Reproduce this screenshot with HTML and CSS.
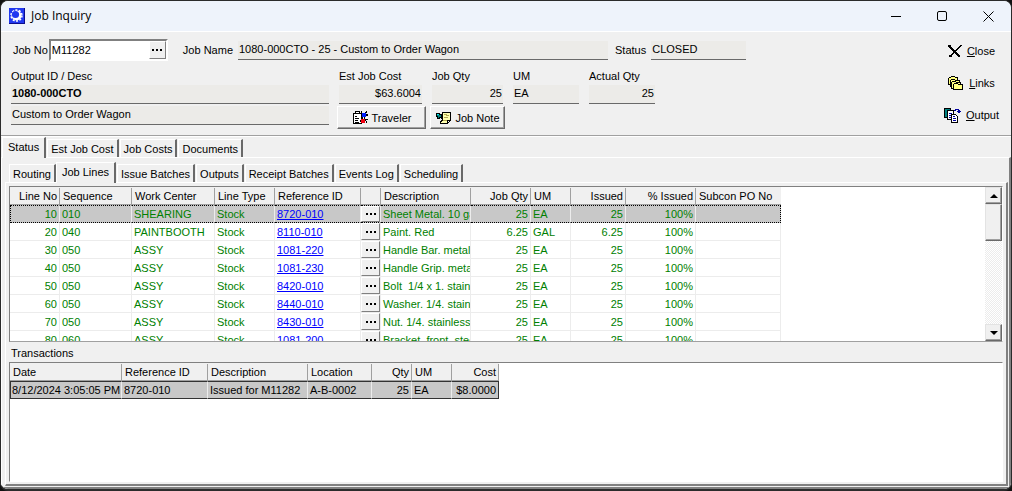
FILE: index.html
```html
<!DOCTYPE html>
<html lang="en">
  <head>
    <meta charset="UTF-8" />
    <meta name="viewport" content="width=device-width, initial-scale=1.0" />
    <title>Job Inquiry</title>
    <link rel="stylesheet" href="styles.css">
  </head>
  <body>
    <div class="window">
      <header class="titlebar">
        <svg class="app-icon" width="16" height="16" viewBox="0 0 16 16">
          <rect width="16" height="16" fill="#0c0c8c" />
          <rect width="15" height="15" fill="#2038f0" />
          <circle cx="7.500" cy="7.500" r="5" fill="#fff" />
          <circle cx="7.500" cy="7.500" r="5.500" fill="none" stroke="#fff" stroke-width="1.500" stroke-dasharray="2 1.450" />
          <circle cx="6.500" cy="6.500" r="3.600" fill="#2038f0" />
        </svg>
        <h1>Job Inquiry</h1>
        <div class="window-buttons">
          <button type="button" aria-label="Minimize">
            <svg width="11" height="11" viewBox="0 0 11 11"><path d="M0 5.5h10" /></svg>
          </button>
          <button type="button" aria-label="Maximize">
            <svg width="11" height="11" viewBox="0 0 11 11"><rect x=".5" y=".5" width="9" height="9" rx="1.5" /></svg>
          </button>
          <button type="button" aria-label="Close window">
            <svg width="11" height="11" viewBox="0 0 11 11"><path d="M.5.5l10 10M10.5.5l-10 10" /></svg>
          </button>
        </div>
      </header>

      <section class="job-header">
        <form class="job-form">
          <div class="form-row">
            <label for="jobNo">Job No</label>
            <div class="lookup">
              <input type="text" id="jobNo" value="M11282" />
              <button type="button" class="dots" aria-label="Find job"><i></i></button>
            </div>
            <label for="jobName" class="label-name">Job Name</label>
            <input type="text" id="jobName" class="field w-name" value="1080-000CTO - 25 - Custom to Order Wagon" readonly />
            <label for="status" class="label-status">Status</label>
            <input type="text" id="status" class="field w-status" value="CLOSED" readonly />
          </div>
          <div class="form-grid">
            <label for="outputId">Output ID / Desc</label>
            <label for="estCost">Est Job Cost</label>
            <label for="jobQty">Job Qty</label>
            <label for="um">UM</label>
            <label for="actualQty">Actual Qty</label>

            <input type="text" id="outputId" class="field bold" value="1080-000CTO" readonly />
            <input type="text" id="estCost" class="field num" value="$63.6004" readonly />
            <input type="text" id="jobQty" class="field num" value="25" readonly />
            <input type="text" id="um" class="field" value="EA" readonly />
            <input type="text" id="actualQty" class="field num" value="25" readonly />

            <input type="text" class="field" value="Custom to Order Wagon" aria-label="Output description" readonly />
            <div class="form-buttons">
              <button type="button" class="push">
                <svg width="17" height="15" viewBox="0 0 17 15" shape-rendering="crispEdges">
                  <path d="M1.500 3.500h8v10h-8z" fill="#fff" stroke="#000" />
                  <path d="M3.500 1.500h4v2h-4z" fill="#fff" stroke="#000" />
                  <path d="M3 6.500h2M3 8.500h4M3 10.500h3M3 12.500h4" stroke="#000" />
                  <path d="M9 1l6 12M15 1L8 12M8 3l8 3M9 8l7-4M9 13l7-4" stroke="#000" fill="none" />
                  <path d="M10 3h4v4h-4z" fill="#0020ff" />
                  <path d="M9 9h4v4H9z" fill="#f00010" />
                  <path d="M14 7h2v2h-2z" fill="#fff" />
                </svg>
                Traveler
              </button>
              <button type="button" class="push">
                <svg width="17" height="14" viewBox="0 0 17 14" shape-rendering="crispEdges">
                  <path d="M7.500 1.500h8v8l-3 3h-7v-2l2-1z" fill="#ffffb0" stroke="#000" />
                  <path d="M9 3.500h2v1h3M9 6.500h4M8 9.500h4" stroke="#b0a850" fill="none" />
                  <path d="M12.500 12.500v-3h3z" stroke="#000" fill="#fff" />
                  <path d="M1.500 2.500h3v1h2v3h-2v1h-2v-2h-1z" fill="#008080" stroke="#000" />
                  <path d="M2 3h2v1H2z" fill="#00f0f0" />
                  <path d="M5 6l3 3" stroke="#000" />
                </svg>
                Job Note
              </button>
            </div>
          </div>
        </form>
        <nav class="side-links">
          <a href="#">
            <svg width="14" height="13" viewBox="0 0 14 13" shape-rendering="crispEdges">
              <path d="M1 1l11 11" stroke="#000" stroke-width="2" />
              <path d="M13 0L2 12" stroke="#000" stroke-width="1.5" />
              <path d="M0 0h3v2H0zM1 10h3v2H1z" fill="#000" />
            </svg>
            <span><u>C</u>lose</span>
          </a>
          <a href="#">
            <svg width="16" height="15" viewBox="0 0 16 15" shape-rendering="crispEdges" stroke="#000" fill="#ffff80">
              <path d="M.5 8.500v-6l1-1h1l1-1h3l1 1h2v7z" />
              <path d="M2.500 10.500v-6l1-1h3l1 1h4v6z" />
              <path d="M3.500 12.500v-6l1-1h3l1 1h4v6z" />
              <path d="M5.500 13.500v-5l1-1h3l1 1h4v5z" />
            </svg>
            <span><u>L</u>inks</span>
          </a>
          <a href="#">
            <svg width="17" height="15" viewBox="0 0 17 15" shape-rendering="crispEdges">
              <path d="M.5.5h6v9h-6z" fill="#008080" stroke="#000" />
              <path d="M3.500 2.500h6v9h-6z" fill="#fff" stroke="#000" />
              <path d="M5 5.500h3M5 7.500h3M5 9.500h3" stroke="#0000a0" />
              <path d="M7.500 6.500h4l2 2v6h-6z" fill="#fff" stroke="#000" />
              <path d="M9 8.500h2M9 10.500h3M9 12.500h3" stroke="#0000a0" />
              <path d="M10 2.500h1v-1h3v1h1v2M13 3.500h4M14 4.500h2" stroke="#0000a0" fill="none" />
            </svg>
            <span><u>O</u>utput</span>
          </a>
        </nav>
      </section>

      <div class="tabs outer-tabs" role="tablist">
        <button type="button" role="tab" class="tab active" aria-selected="true">Status</button>
        <button type="button" role="tab" class="tab">Est Job Cost</button>
        <button type="button" role="tab" class="tab">Job Costs</button>
        <button type="button" role="tab" class="tab">Documents</button>
      </div>

      <main class="page outer-page">
        <div class="tabs inner-tabs" role="tablist">
          <button type="button" role="tab" class="tab">Routing</button>
          <button type="button" role="tab" class="tab active" aria-selected="true">Job Lines</button>
          <button type="button" role="tab" class="tab">Issue Batches</button>
          <button type="button" role="tab" class="tab">Outputs</button>
          <button type="button" role="tab" class="tab">Receipt Batches</button>
          <button type="button" role="tab" class="tab">Events Log</button>
          <button type="button" role="tab" class="tab">Scheduling</button>
        </div>

        <div class="page inner-page">
          <div class="grid lines-grid">
            <div class="grid-body">
              <table class="lines">
                <colgroup>
                  <col class="c50" /><col class="c72" /><col class="c83" /><col class="c60" />
                  <col class="c86" /><col class="c20" /><col class="c90" /><col class="c60" />
                  <col class="c40" /><col class="c55" /><col class="c70" /><col class="c85" />
                </colgroup>
                <thead>
                  <tr>
                    <th class="num">Line No</th>
                    <th>Sequence</th>
                    <th>Work Center</th>
                    <th>Line Type</th>
                    <th>Reference ID</th>
                    <th></th>
                    <th>Description</th>
                    <th class="num">Job Qty</th>
                    <th>UM</th>
                    <th class="num">Issued</th>
                    <th class="num">% Issued</th>
                    <th>Subcon PO No</th>
                  </tr>
                </thead>
                <tbody id="lineRows"></tbody>
              </table>
            </div>
            <div class="scrollbar">
              <button type="button" class="arrow up" aria-label="Scroll up"></button>
              <div class="thumb"></div>
              <button type="button" class="arrow down" aria-label="Scroll down"></button>
            </div>
          </div>

          <h2>Transactions</h2>

          <div class="grid trans-grid">
            <table class="trans">
              <colgroup>
                <col class="c112" /><col class="c86" /><col class="c100" /><col class="c64" />
                <col class="c40" /><col class="c40" /><col class="c47" />
              </colgroup>
              <thead>
                <tr>
                  <th>Date</th>
                  <th>Reference ID</th>
                  <th>Description</th>
                  <th>Location</th>
                  <th class="num">Qty</th>
                  <th>UM</th>
                  <th class="num">Cost</th>
                </tr>
              </thead>
              <tbody>
                <tr class="selected">
                  <td>8/12/2024 3:05:05 PM</td>
                  <td>8720-010</td>
                  <td>Issued for M11282</td>
                  <td>A-B-0002</td>
                  <td class="num">25</td>
                  <td>EA</td>
                  <td class="num">$8.0000</td>
                </tr>
              </tbody>
            </table>
          </div>
        </div>
      </main>
    </div>

    <script>
      const lines = [
        [10, "010", "SHEARING", "8720-010", "Sheet Metal. 10 gauge", "25", "EA"],
        [20, "040", "PAINTBOOTH", "8110-010", "Paint. Red", "6.25", "GAL"],
        [30, "050", "ASSY", "1081-220", "Handle Bar. metal", "25", "EA"],
        [40, "050", "ASSY", "1081-230", "Handle Grip. metal", "25", "EA"],
        [50, "050", "ASSY", "8420-010", "Bolt  1/4 x 1. stainless", "25", "EA"],
        [60, "050", "ASSY", "8440-010", "Washer. 1/4. stainless", "25", "EA"],
        [70, "050", "ASSY", "8430-010", "Nut. 1/4. stainless", "25", "EA"],
        [80, "060", "ASSY", "1081-200", "Bracket. front. steel", "25", "EA"],
      ];

      document.getElementById("lineRows").innerHTML = lines
        .map(
          ([no, seq, center, ref, desc, qty, um], i) => `
          <tr class="${i === 0 ? "selected" : ""}">
            <td class="num">${no}</td>
            <td>${seq}</td>
            <td>${center}</td>
            <td>Stock</td>
            <td><a href="#">${ref}</a></td>
            <td class="pick"><button type="button" class="dots" aria-label="Open ${ref}"><i></i></button></td>
            <td>${desc}</td>
            <td class="num">${qty}</td>
            <td>${um}</td>
            <td class="num">${qty}</td>
            <td class="num">100%</td>
            <td></td>
          </tr>`
        )
        .join("");
    </script>
  </body>
</html>
```
FILE: styles.css
```css
* {
  box-sizing: border-box;
}

body {
  margin: 0;
  background-color: #111;
  font-family: "Liberation Sans", Arial, sans-serif;
  font-size: 11px;
  line-height: 14px;
  color: #000;
}

button,
input {
  font: inherit;
  color: inherit;
  margin: 0;
}

.window {
  display: flex;
  flex-direction: column;
  height: 100vh;
  border: 1px solid #2b2b2b;
  border-bottom-width: 2px;
  border-radius: 8px;
  background-color: #f0f0f0;
  overflow: hidden;
}

/* Title bar */
.titlebar {
  display: flex;
  align-items: center;
  height: 31px;
  flex: none;
  padding-left: 8px;
  background-color: #eef3fb;
  border-bottom: 1px solid #fff;
}

.titlebar h1 {
  margin: 0 0 0 6px;
  font-family: "Open Sans", "Noto Sans", sans-serif;
  font-size: 12px;
  font-weight: normal;
  line-height: 16px;
}

.window-buttons {
  display: flex;
  margin-left: auto;
}

.window-buttons button {
  display: flex;
  align-items: center;
  justify-content: center;
  width: 46px;
  height: 28px;
  padding: 0;
  border: none;
  background: none;
}

.window-buttons svg {
  fill: none;
  stroke: #000;
}

/* Job header */
.job-header {
  display: flex;
  justify-content: space-between;
  flex: none;
  height: 104px;
  padding: 7px 12px 0 10px;
  border-bottom: 1px solid #a0a0a0;
}

.form-row {
  display: flex;
  align-items: center;
  height: 22px;
  padding-left: 2px;
}

.lookup {
  display: flex;
  width: 119px;
  height: 22px;
  margin-left: 1px;
  border: 2px solid;
  border-color: #808080 #fff #fff #808080;
  background-color: #fff;
}

.lookup input {
  flex: 1;
  min-width: 0;
  padding: 0 1px;
  border: none;
  outline: none;
  background: none;
}

.dots {
  display: flex;
  align-items: center;
  justify-content: center;
  width: 17px;
  padding: 0;
  border: 1px solid;
  border-color: #fff #808080 #808080 #fff;
  background-color: #f0f0f0;
}

.dots i {
  width: 10px;
  height: 2px;
  background: repeating-linear-gradient(90deg, #000 0 2px, transparent 2px 4px);
}

.label-name {
  margin-left: 15px;
}

.label-status {
  margin-left: 7px;
}

.field {
  min-width: 0;
  height: 19px;
  padding: 0 1px 2px;
  border: none;
  border-bottom: 1px solid #696969;
  outline: none;
  background-color: #ecebe8;
}

.w-name {
  width: 370px;
  margin-left: 5px;
}

.w-status {
  width: 95px;
  margin-left: 5px;
}

.bold {
  font-weight: bold;
}

.num {
  text-align: right;
}

.form-grid {
  display: grid;
  grid-template-columns: 318px 83px 71px 66px 66px;
  column-gap: 10px;
  row-gap: 2px;
  margin-top: 8px;
}

.form-buttons {
  display: flex;
  grid-column: 2 / -1;
  gap: 4px;
  height: 23px;
  margin-left: -2px;
}

.push {
  display: flex;
  align-items: center;
  justify-content: center;
  gap: 3px;
  min-width: 75px;
  padding: 0 4px;
  border: 1px solid;
  border-color: #fff #696969 #696969 #fff;
  box-shadow: inset -1px -1px #a0a0a0;
  background-color: #f0f0f0;
}

.push:first-child {
  min-width: 89px;
}

.side-links {
  display: flex;
  flex-direction: column;
  align-items: center;
  gap: 16px;
  padding-top: 4px;
}

.side-links a {
  display: flex;
  align-items: center;
  gap: 5px;
  height: 16px;
  color: #000;
  text-decoration: none;
}

/* Tabs */
.tabs {
  display: flex;
  align-items: flex-end;
  flex: none;
}

.outer-tabs {
  height: 21px;
  padding-left: 1px;
  border-top: 1px solid #fff;
}

.inner-tabs {
  height: 24px;
  padding-left: 3px;
}

.tab {
  height: 18px;
  margin-left: 1px;
  padding: 0 3px;
  border: solid;
  border-width: 1px 2px 0 1px;
  border-color: #fff #696969 #fff #fff;
  background-color: #f0f0f0;
}

.tab.active {
  position: relative;
  height: 21px;
  margin: 0 0 -1px;
  padding: 0 5px 3px;
}

/* Tab pages */
.page {
  display: flex;
  flex-direction: column;
  flex: 1;
  min-height: 0;
  border: solid;
  border-width: 1px 2px 2px 1px;
  border-color: #fff #808080 #808080 #fff;
}

.outer-page {
  padding: 0 1px 1px 3px;
}

.inner-page {
  padding: 3px 3px 2px;
}

.inner-page h2 {
  margin: 0;
  padding: 4px 2px 0;
  height: 20px;
  flex: none;
  font-size: 11px;
  font-weight: normal;
}

/* Grids */
.grid {
  border: 1px solid;
  border-color: #808080 #fff #a0a0a0 #808080;
  background-color: #fff;
  overflow: hidden;
}

.lines-grid {
  display: flex;
  flex: none;
  height: 156px;
}

.grid-body {
  flex: 1;
  overflow: hidden;
}

.trans-grid {
  flex: 1;
  border-bottom-color: #fff;
}

table {
  table-layout: fixed;
  border-collapse: separate;
  border-spacing: 0;
}

.lines {
  width: 771px;
  color: #008000;
}

.trans {
  width: 489px;
}

.c20 { width: 20px; }
.c40 { width: 40px; }
.c47 { width: 47px; }
.c50 { width: 50px; }
.c55 { width: 55px; }
.c60 { width: 60px; }
.c64 { width: 64px; }
.c70 { width: 70px; }
.c72 { width: 72px; }
.c83 { width: 83px; }
.c85 { width: 85px; }
.c86 { width: 86px; }
.c90 { width: 90px; }
.c100 { width: 100px; }
.c112 { width: 112px; }

th,
td {
  height: 18px;
  padding: 0 2px;
  overflow: hidden;
  white-space: pre;
  text-align: left;
  font-weight: normal;
  border-right: 1px solid #ececec;
  border-bottom: 1px solid #ececec;
}

th {
  padding: 0 3px;
  color: #000;
  background: linear-gradient(#a0a0a0, #a0a0a0) right bottom / 1px 16px no-repeat #f0f0f0;
  border-right: none;
  border-bottom-color: #a0a0a0;
}

.lines th:last-child {
  background-image: none;
}

th.num,
td.num {
  text-align: right;
}

td a {
  color: #0000ff;
}

.pick {
  padding: 0;
}

.pick .dots {
  width: 100%;
  height: 17px;
}

.selected td {
  background-color: #c8c8c8;
}

.lines .selected td {
  border-top: 1px dotted #000;
  border-bottom: 1px dotted #000;
}

.lines .selected td:first-child {
  border-left: 1px dotted #000;
}

.lines .selected td:last-child {
  border-right: 1px dotted #000;
}

.lines .selected .dots {
  height: 16px;
}

.trans .selected td {
  border-top: 1px solid #333;
  border-bottom: 1px solid #333;
}

.trans .selected td:first-child {
  padding: 0 0 0 1px;
  border-left: 1px solid #333;
}

.trans .selected td:last-child {
  border-right: 1px solid #333;
}

/* Scrollbar */
.scrollbar {
  display: flex;
  flex-direction: column;
  width: 17px;
  background: repeating-conic-gradient(#ececec 0 25%, #fff 0 50%) 0 0 / 2px 2px;
}

.arrow,
.thumb {
  flex: none;
  height: 17px;
  padding: 0;
  border: 1px solid;
  border-color: #e3e3e3 #696969 #696969 #e3e3e3;
  box-shadow: inset -1px -1px #a0a0a0;
  background-color: #f0f0f0;
}

.thumb {
  height: 37px;
}

.arrow {
  display: flex;
  align-items: center;
  justify-content: center;
}

.arrow::before {
  content: "";
  border: 4px solid transparent;
}

.up::before {
  border-top: none;
  border-bottom-color: #000;
}

.down {
  margin-top: auto;
}

.down::before {
  border-bottom: none;
  border-top-color: #000;
}
```
